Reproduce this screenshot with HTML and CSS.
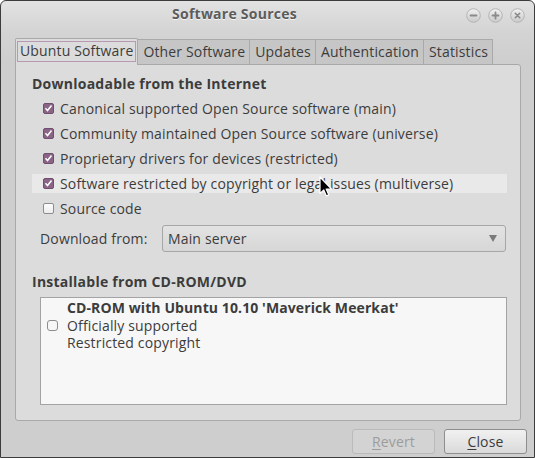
FILE: index.html
```html
<!DOCTYPE html>
<html>
<head>
<meta charset="utf-8">
<link rel="stylesheet" href="styles.css">
</head>
<body>
<div class="window">
  <div class="titlebar">
    <div class="title">Software Sources</div>
    <div class="controls">
      <svg class="ctl" width="15" height="15" viewBox="0 0 15 15"><defs><linearGradient id="g1" x1="0" y1="0" x2="0" y2="1"><stop offset="0" stop-color="#f2f2f2"/><stop offset="1" stop-color="#c9c9c9"/></linearGradient></defs><circle cx="7.5" cy="7.5" r="6.8" fill="url(#g1)" stroke="#b4b4b4"/><path d="M4.5 7.5h6" stroke="#8a8a8a" stroke-width="1.8" stroke-linecap="round"/></svg>
      <svg class="ctl" width="15" height="15" viewBox="0 0 15 15"><circle cx="7.5" cy="7.5" r="6.8" fill="url(#g1)" stroke="#b4b4b4"/><path d="M4.5 7.5h6M7.5 4.5v6" stroke="#8a8a8a" stroke-width="1.8" stroke-linecap="round"/></svg>
      <svg class="ctl" width="15" height="15" viewBox="0 0 15 15"><circle cx="7.5" cy="7.5" r="6.8" fill="url(#g1)" stroke="#b4b4b4"/><path d="M5.3 5.3l4.4 4.4M9.7 5.3l-4.4 4.4" stroke="#8a8a8a" stroke-width="1.6" stroke-linecap="round"/></svg>
    </div>
  </div>

  <div class="body">
    <div class="tabs">
      <div class="tab active"><span class="focus">Ubuntu Software</span></div>
      <div class="tab">Other Software</div>
      <div class="tab">Updates</div>
      <div class="tab">Authentication</div>
      <div class="tab">Statistics</div>
    </div>
    <div class="panel">
      <div class="heading">Downloadable from the Internet</div>
      <div class="row"><span class="cb checked"></span>Canonical supported Open Source software (main)</div>
      <div class="row"><span class="cb checked"></span>Community maintained Open Source software (universe)</div>
      <div class="row"><span class="cb checked"></span>Proprietary drivers for devices (restricted)</div>
      <div class="row hover"><span class="cb checked"></span>Software restricted by copyright or legal issues (multiverse)</div>
      <div class="row"><span class="cb"></span>Source code</div>
      <div class="download">
        <span class="dl-label">Download from:</span>
        <div class="combo"><span>Main server</span><span class="arrow"></span></div>
      </div>
      <div class="heading heading2">Installable from CD-ROM/DVD</div>
      <div class="cdbox">
        <div class="cditem">
          <span class="cb"></span>
          <div class="cdtext">
            <div class="bold">CD-ROM with Ubuntu 10.10 'Maverick Meerkat'</div>
            <div>Officially supported</div>
            <div>Restricted copyright</div>
          </div>
        </div>
      </div>
    </div>
    <div class="buttons">
      <div class="btn disabled"><u>R</u>evert</div>
      <div class="btn"><u>C</u>lose</div>
    </div>
  </div>

  <svg class="cursor" width="14" height="22" viewBox="0 0 14 22"><path d="M1 1v16.5l3.8-3.6 2.6 6 2.4-1-2.6-5.9h5.3z" fill="#000" stroke="#fff" stroke-width="1.2" stroke-linejoin="round"/></svg>
</div>
</body>
</html>
```
FILE: styles.css
```css
* { box-sizing: border-box; }
html, body { margin: 0; padding: 0; }
body {
  font-family: "Open Sans", "Noto Sans", sans-serif;
  font-size: 14px;
  letter-spacing: 0.15px;
  color: #3c3c3c;
  width: 535px;
  height: 458px;
  overflow: hidden;
  background: #fff;
}
.window {
  position: relative;
  width: 535px;
  height: 458px;
  border: 1px solid #3c3c3c;
  border-radius: 6px 6px 0 0;
  background: linear-gradient(#e2e2e2 0, #d4d4d4 30px, #cecece 60px, #cecece 100%);
  display: flex;
  flex-direction: column;
}
.titlebar {
  height: 25px;
  display: flex;
  align-items: center;
  position: relative;
}
.title {
  flex: 1;
  font-weight: bold;
  font-size: 14px;
  letter-spacing: 0.25px;
  color: #5c5c5c;
  text-shadow: 0 1px 0 #f4f4f4;
  padding-left: 171px;
  margin-top: -1px;
}
.controls {
  display: flex;
  gap: 7px;
  padding-right: 9px;
  padding-top: 3px;
}
.ctl { display: block; }
.body {
  flex: 1;
  display: flex;
  flex-direction: column;
  padding: 12px 13px 0 14px;
}
.tabs {
  display: flex;
  align-items: flex-end;
  height: 26px;
  position: relative;
  z-index: 1;
}
.tab {
  height: 25px;
  padding: 0 4px 0 5px;
  display: flex;
  align-items: center;
  background: #c6c6c6;
  border: 1px solid #a9a9a9;
  border-left: none;
  border-bottom: none;
  line-height: 1;
}
.tab.active {
  height: 27px;
  margin-bottom: -1px;
  background: #dcdcdc;
  border: 1px solid #a9a9a9;
  border-bottom: none;
  border-radius: 2px 2px 0 0;
  padding: 0 1px;
}
.focus {
  display: flex;
  align-items: center;
  height: 21px;
  padding: 0 2px;
  border: 1px solid #b899b4;
  margin-top: -2px;
}
.panel {
  height: 357px;
  background: #dcdcdc;
  border: 1px solid #a9a9a9;
  border-radius: 0 3px 3px 3px;
  padding: 11px 13px 0 16px;
  display: flex;
  flex-direction: column;
  gap: 6px;
}
.heading {
  font-weight: bold;
  line-height: 17px;
  height: 17px;
  letter-spacing: 0.25px;
  margin-top: -1px;
  margin-bottom: 1px;
}
.row {
  height: 19px;
  display: flex;
  align-items: center;
  padding-left: 3px;
  line-height: 19px;
}
.row.hover { background: #e9e9e9; }
.cb {
  width: 11px;
  height: 11px;
  flex: none;
  margin-right: 6px;
  border: 1px solid #8d8d8d;
  border-radius: 2px;
  background: linear-gradient(#fdfdfd, #ececec);
}
.row .cb { margin-left: 8px; }
.cb.checked {
  border-color: #6f4f6d;
  background: #8a6387 url("data:image/svg+xml;utf8,<svg xmlns='http://www.w3.org/2000/svg' width='9' height='9' viewBox='0 0 9 9'><path d='M1.5 4.3l2 2.2 4-5' fill='none' stroke='white' stroke-width='1.5'/></svg>") center/9px 9px no-repeat;
}
.download {
  display: flex;
  align-items: center;
  margin-top: 1px;
  padding-left: 8px;
}
.dl-label {
  width: 122px;
}
.combo {
  width: 344px;
  height: 27px;
  border: 1px solid #a6a6a6;
  border-radius: 3px;
  background: linear-gradient(#e3e3e3, #d6d6d6);
  display: flex;
  align-items: center;
  justify-content: space-between;
  padding: 0 8px 0 5px;
}
.arrow {
  width: 0; height: 0;
  border-left: 4px solid transparent;
  border-right: 4px solid transparent;
  border-top: 7px solid #7a7a7a;
}
.heading2 { margin-top: 15px; }
.cdbox {
  margin-left: 8px;
  width: 467px;
  height: 108px;
  background: #f7f7f7;
  border: 1px solid #a3a3a3;
  padding: 1px 0 0 6px;
}
.cditem {
  display: flex;
  align-items: center;
}
.cditem .cb { margin-right: 9px; border-radius: 3px; background: #f7f7f7; }
.cdtext { line-height: 17.5px; }
.bold { font-weight: bold; letter-spacing: 0.1px; }
.buttons {
  display: flex;
  justify-content: flex-end;
  gap: 9px;
  padding-top: 8px;
  margin-right: -6px;
}
.btn {
  width: 83px;
  height: 25px;
  display: flex;
  align-items: center;
  justify-content: center;
  border: 1px solid #8e8e8e;
  border-radius: 3px;
  background: linear-gradient(#f1f1f1, #dadada);
  color: #3c3c3c;
}
.btn.disabled {
  border-color: #bababa;
  background: #d3d3d3;
  color: #9c9c9c;
}
.btn u { text-decoration-thickness: 1px; text-underline-offset: 2px; }
.cursor {
  position: absolute;
  left: 318px;
  top: 175px;
}
```
